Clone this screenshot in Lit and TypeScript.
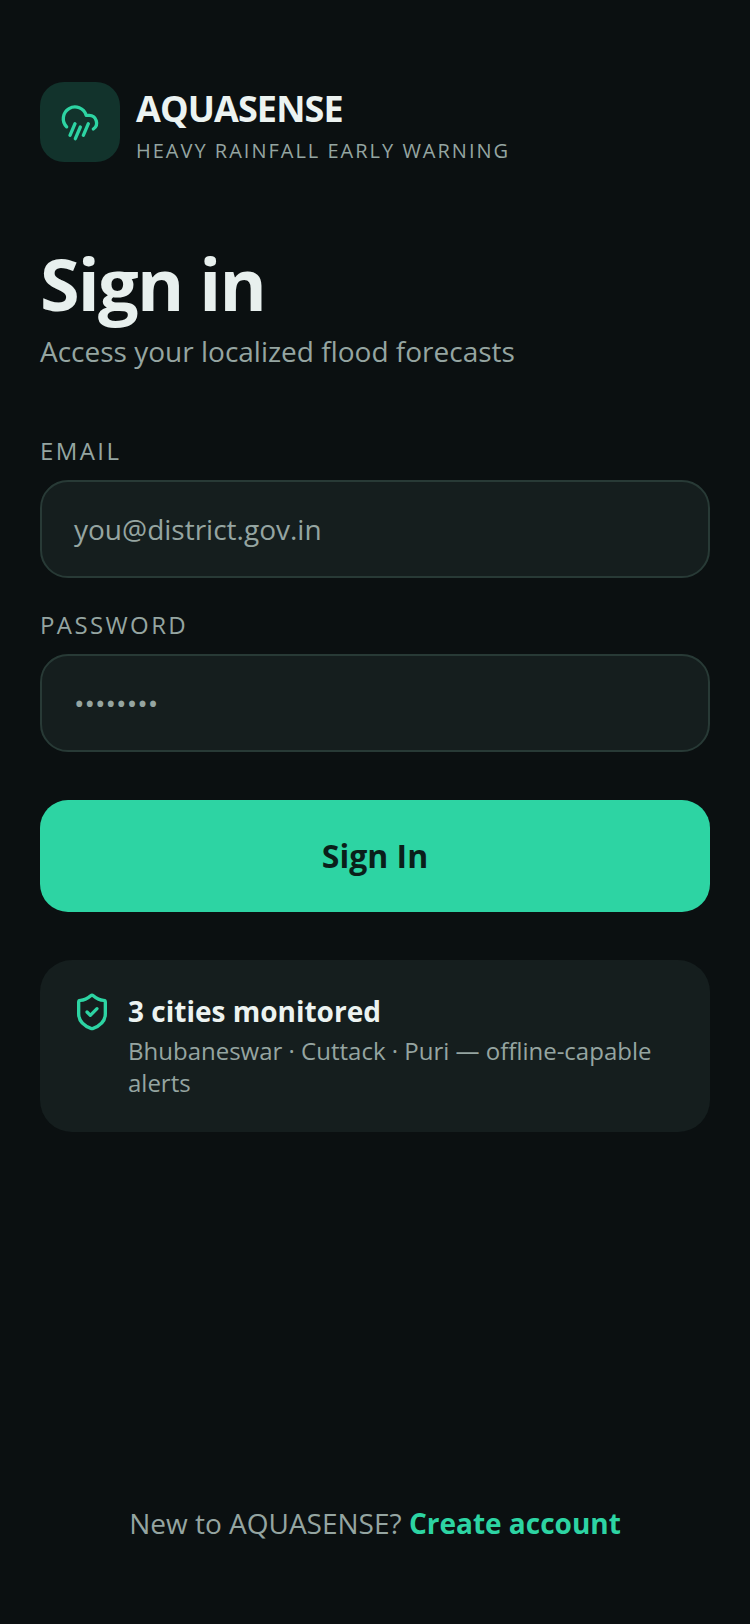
import { LitElement, html, css } from "lit";
import { customElement } from "lit/decorators.js";

@customElement("app-root")
export class AppRoot extends LitElement {
  static styles = css`
    :host { display: block; width: 750px; height: 1624px; background: #0b1011; font-family: "Open Sans", sans-serif; color: #eef5f3; }
    .page { box-sizing: border-box; height: 1624px; padding: 82px 40px 0; display: flex; flex-direction: column; }
    .brand { display: flex; gap: 16px; align-items: center; }
    .logo { width: 80px; height: 80px; border-radius: 24px; background: #12332c; display: flex; align-items: center; justify-content: center; color: #2dd4a3; }
    .info { height: 80px; }
    .name { font-size: 36px; font-weight: 700; line-height: 53px; letter-spacing: -0.9px; color: #ecf3f1; }
    .tag { font-size: 20px; line-height: 24px; letter-spacing: 2px; color: #95a5a1; margin-top: 4px; }
    h1 { margin: 78px 0 0; font-size: 72px; line-height: 86px; font-weight: 700; letter-spacing: -1.8px; color: #e8f0ee; }
    .sub { font-size: 28px; line-height: 38px; color: #95a5a1; margin-top: 6px; }
    label { display: block; font-size: 24px; line-height: 32px; letter-spacing: 2.4px; color: #95a5a1; margin-bottom: 13px; }
    .email { margin-top: 65px; }
    .pw { margin-top: 31px; }
    .input { box-sizing: border-box; height: 98px; border: 2px solid #283a36; border-radius: 28px; background: #151e1e; padding: 0 32px; display: flex; align-items: center; font-size: 28px; color: #95a5a1; }
    .btn { box-sizing: border-box; margin-top: 48px; height: 112px; padding-bottom: 2px; border-radius: 28px; background: #2dd4a3; color: #0a1f1a; display: flex; align-items: center; justify-content: center; font-size: 32px; font-weight: 700; }
    .card { margin-top: 48px; background: #151e1e; border-radius: 32px; padding: 32px 32px 33px; display: flex; gap: 16px; }
    .card svg { flex: none; color: #2dd4a3; }
    .t { font-size: 28px; line-height: 38px; font-weight: 700; color: #ecf3f1; }
    .d { font-size: 24px; line-height: 32px; color: #95a5a1; margin-top: 5px; }
    .foot { margin-top: auto; margin-bottom: 82px; text-align: center; font-size: 28px; line-height: 38px; color: #95a5a1; }
    .foot b { color: #2dd4a3; font-weight: 700; }
  `;
  render() {
    return html`<div class="page">
      <div class="brand">
        <div class="logo"><svg width="40" height="40" viewBox="0 0 24 24" fill="none" stroke="currentColor" stroke-width="2" stroke-linecap="round" stroke-linejoin="round"><path d="M4 14.9A7 7 0 1 1 15.7 8h1.8a4.5 4.5 0 0 1 2.5 8.2"/><path d="m9.2 22 3-7"/><path d="m9 13-3 7"/><path d="m17 13-3 7"/></svg></div>
        <div class="info"><div class="name">AQUASENSE</div><div class="tag">HEAVY RAINFALL EARLY WARNING</div></div>
      </div>
      <h1>Sign in</h1>
      <div class="sub">Access your localized flood forecasts</div>
      <label class="email">EMAIL</label>
      <div class="input">you@district.gov.in</div>
      <label class="pw">PASSWORD</label>
      <div class="input">••••••••</div>
      <div class="btn">Sign In</div>
      <div class="card">
        <svg width="40" height="40" viewBox="0 0 24 24" fill="none" stroke="currentColor" stroke-width="2" stroke-linecap="round" stroke-linejoin="round"><path d="M20 13c0 5-3.5 7.5-7.66 8.95a1 1 0 0 1-.67-.01C7.5 20.5 4 18 4 13V6a1 1 0 0 1 1-1c2 0 4.5-1.2 6.24-2.72a1.17 1.17 0 0 1 1.52 0C14.51 3.81 17 5 19 5a1 1 0 0 1 1 1z"/><path d="m9 12 2 2 4-4"/></svg>
        <div><div class="t">3 cities monitored</div><div class="d">Bhubaneswar · Cuttack · Puri — offline-capable alerts</div></div>
      </div>
      <div class="foot">New to AQUASENSE? <b>Create account</b></div>
    </div>`;
  }
}
